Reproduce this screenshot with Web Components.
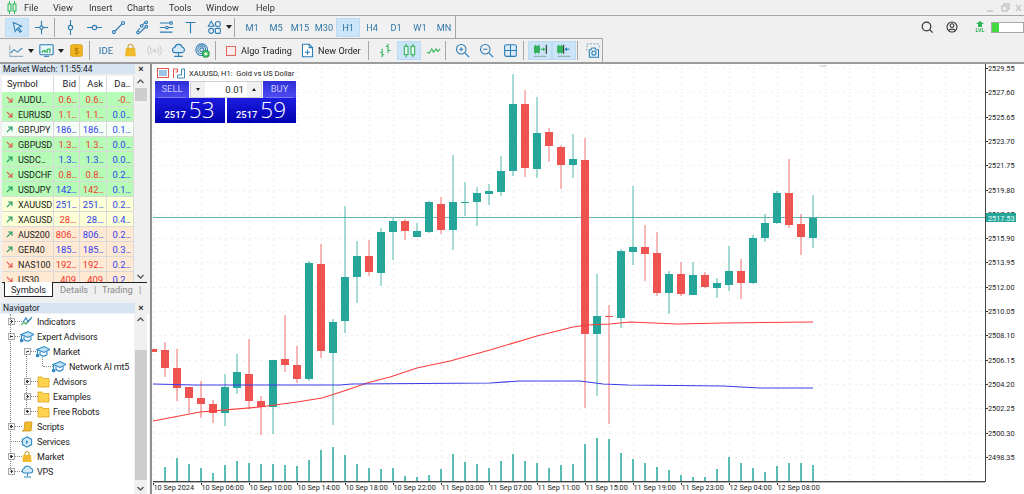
<!DOCTYPE html>
<html>
<head>
<meta charset="utf-8">
<title>MetaTrader 5</title>
<style>
    html, body { margin: 0; height: 494px; overflow: hidden; background: #f0f0f0; }
    body { font-family: Roboto, "Liberation Sans", sans-serif; font-size: 9.6px; color: #222; }
</style>
</head>
<body>
<mt-app>
    <mt-menu></mt-menu>
    <mt-toolbars></mt-toolbars>
    <mt-workspace>
        <market-watch slot="left"></market-watch>
        <mt-navigator slot="left"></mt-navigator>
        <mt-chart></mt-chart>
    </mt-workspace>
</mt-app>
<script>
const BLUE = "#2b7db5";
const GREEN = "#2fb457";

function svg(body, w = 15, h = 15) {
    return `<svg width="${w}" height="${h}" viewBox="0 0 18 18" fill="none" stroke="${BLUE}" stroke-width="1.3">${body}</svg>`;
}

const ICONS = {
    cursor: svg(`<path d="M4 3l10 4.5-4 1.6 3.6 4.2-1.5 1.3-3.6-4.2-2.3 3.4z" fill="#dcebf7"/>`),
    cross: svg(`<path d="M9 1v6M9 11v6M1 9h6M11 9h6"/><circle cx="9" cy="9" r="2"/>`),
    vline: svg(`<path d="M9 0v6M9 12v6"/><circle cx="9" cy="9" r="2.6"/>`),
    hline: svg(`<path d="M0 9h6M12 9h6"/><circle cx="9" cy="9" r="2.6"/>`),
    trend: svg(`<path d="M4.5 13.5L13.5 4.5"/><circle cx="3.5" cy="14.5" r="1.8"/><circle cx="14.5" cy="3.5" r="1.8"/>`),
    channel: svg(`<path d="M9.5 5.5l2.5-2.5M3 13l3-3M6 15l6-6"/><circle cx="13.5" cy="2.8" r="1.6"/><circle cx="8" cy="7" r="1.6"/><circle cx="3.6" cy="15" r="1.6"/><circle cx="13.6" cy="8" r="1.6"/>`),
    fib: svg(`<path d="M1 3.5h12M1 9h7M11 9h6M1 14.5h15"/><circle cx="14.5" cy="3.5" r="1.6"/><circle cx="9.5" cy="9" r="1.6"/>`),
    text: svg(`<path d="M3 3h12M9 3v13" stroke-width="1.4"/>`),
    shapes: svg(`<path d="M5 1.5l3.4 6h-6.8z"/><circle cx="13" cy="4.8" r="3"/><circle cx="5" cy="13" r="3"/><rect x="10" y="10" width="6" height="6" rx="1"/>`),
    chartLine: svg(`<path d="M1 2v14h16" stroke="#9ab0c2"/><path d="M2 12l4-4 4 3 6-5" stroke="#3f87b8"/>`),
    monitor: svg(`<rect x="1" y="2" width="16" height="12" rx="1" fill="#eaf4fb"/><path d="M3 11l3-2 2 1 3-3 3 1" stroke="#2fb457"/><path d="M6 16h6" /><path d="M4 12v-1M7 12v-2M10 12V9M13 12V7" stroke="#2fb457"/>`),
    gold: `<svg width="15" height="15" viewBox="0 0 18 18"><rect x="2" y="2" width="14" height="14" rx="2" fill="#f1b61f" stroke="#d99a12"/><text x="9" y="13" text-anchor="middle" font-size="10" font-family="Liberation Sans" fill="#a66a06">$</text></svg>`,
    bag: `<svg width="15" height="15" viewBox="0 0 18 18"><path d="M3.5 6h11l1 10h-13z" fill="#f2bb2c"/><path d="M6 7V4.5a3 3 0 0 1 6 0V7" fill="none" stroke="#c78f14" stroke-width="1.2"/></svg>`,
    signal: svg(`<g stroke="#c9c9c9"><circle cx="9" cy="9" r="1.6"/><path d="M5.5 5.5a5 5 0 0 0 0 7M12.5 5.5a5 5 0 0 1 0 7M3 3.5a8.5 8.5 0 0 0 0 11M15 3.5a8.5 8.5 0 0 1 0 11"/></g>`),
    cloud: svg(`<path d="M5 11.5a3 3 0 0 1-.5-6 4.6 4.6 0 0 1 9-.3 3.2 3.2 0 0 1 0 6.3z" fill="#d6eaf8"/><path d="M9 11.5v4M4 16h10"/>`),
    globe: svg(`<circle cx="8" cy="8" r="7"/><circle cx="8" cy="8" r="4.6"/><circle cx="8" cy="8" r="2.2"/><circle cx="13" cy="13" r="4" fill="#42c765" stroke="#2b9a4d"/><path d="M13 11v4M11 13h4" stroke="#fff"/>`),
    newOrder: svg(`<path d="M3 1.5h8l4 4v11H3z" fill="#fff"/><path d="M11 1.5v4h4M9 8v6M6 11h6"/>`),
    bars: svg(`<g stroke="#34b25c"><path d="M5 7v10M2.5 11H5M5 14h2.5M12 1v11M9.5 4H12M12 9h3"/></g>`),
    candles: svg(`<g stroke="#34b25c" fill="#e9f8ee"><path d="M5 1v16M13 1v16"/><rect x="2.8" y="4" width="4.4" height="10"/><rect x="10.8" y="4" width="4.4" height="10"/></g>`),
    line: svg(`<path d="M1 11l3 1 3-5 2 4 3-4 2 3 3-3" stroke="#34b25c"/>`),
    zoomIn: svg(`<circle cx="7.5" cy="7.5" r="5.7"/><path d="M12 12l5 5M5 7.5h5M7.5 5v5"/>`),
    zoomOut: svg(`<circle cx="7.5" cy="7.5" r="5.7"/><path d="M12 12l5 5M5 7.5h5"/>`),
    grid: svg(`<rect x="2" y="2" width="14" height="14" rx="2" fill="#dcebf7"/><path d="M9 2v14M2 9h14"/>`),
    scroll: svg(`<g stroke="#34b25c"><path d="M3 2v11M6.5 2v11"/><rect x="1.8" y="4" width="2.4" height="7" fill="#34b25c"/><rect x="5.3" y="4" width="2.4" height="7" fill="#34b25c"/><path d="M9 7.5h4"/></g><path d="M16 2v11" stroke="#333"/><path d="M12 5l3 2.5-3 2.5z" fill="${GREEN}" stroke="none"/><path d="M1 16h15" stroke="#8aa"/>`),
    shift: svg(`<g stroke="#34b25c"><path d="M2 2v11M5.5 2v11"/><rect x=".8" y="4" width="2.4" height="7" fill="#34b25c"/><rect x="4.3" y="4" width="2.4" height="7" fill="#34b25c"/></g><path d="M10 7.5h5" stroke="${BLUE}"/><path d="M12 5l-3 2.5 3 2.5z" fill="${BLUE}" stroke="none"/><path d="M8 2v11" stroke="#333"/><path d="M1 16h15" stroke="#8aa"/>`),
    camera: svg(`<path d="M1 1h2M5 1h2M9 1h2M13 1h2M1 3v2M1 7v2M16 3v2" stroke="#7eaccc"/><path d="M4 8h2l1-2h4l1 2h3v9H4z" fill="#e4f0f9"/><circle cx="9.5" cy="12" r="2.5"/>`)
};

class MtApp extends HTMLElement {
    constructor() {
        super();
        this.attachShadow({ mode: "open" });
        this.shadowRoot.innerHTML = `
            <style>
                :host { display: flex; flex-direction: column; width: 1024px; height: 494px; filter: blur(.35px); }
            </style>
            <slot></slot>
        `;
    }
}

class MtMenu extends HTMLElement {
    constructor() {
        super();
        this.attachShadow({ mode: "open" });
        const items = [["File", 29], ["View", 36], ["Insert", 38], ["Charts", 42], ["Tools", 37], ["Window", 50], ["Help", 30]];
        this.shadowRoot.innerHTML = `
            <style>
                :host {
                    display: flex; align-items: center; height: 15px; flex: none; padding-left: 24px;
                    border-bottom: 1px solid #a6a6a6; position: relative; font-size: 9.2px; color: #333;
                }
                .logo { position: absolute; left: 6px; top: 1px; }
                span { display: block; flex: none; }
                .win { margin-left: auto; padding-right: 2px; }
            </style>
            <svg class="logo" width="12" height="13" viewBox="0 0 12 13" fill="none" stroke="#2fb457">
                <path d="M3.5 0v13M8.5 0v13"/><rect x="2" y="3" width="3" height="7" fill="#d8f5df"/><rect x="7" y="3" width="3" height="7" fill="#d8f5df"/>
            </svg>
            ${items.map(([t, w]) => `<span style="width:${w}px">${t}</span>`).join("")}
            <svg class="win" width="36" height="12" viewBox="0 0 36 12" fill="none" stroke="#c4c4c4" stroke-width="1.3">
                <path d="M1 9h6M16 4h5v5h-5zM18 3V2h5v5h-1M30 3l5 6M35 3l-5 6"/>
            </svg>
        `;
    }
}

class MtToolbars extends HTMLElement {
    constructor() {
        super();
        this.attachShadow({ mode: "open" });
        const btn = (icon, on, w = 24) => `<div class="btn ${on ? "on" : ""}" style="width:${w}px">${ICONS[icon]}</div>`;
        const sep = (l, r) => `<div class="sep" style="margin-left:${l}px;margin-right:${r}px"></div>`;
        const drop = (w = 6) => `<div class="drop" style="width:${w}px"><i></i></div>`;
        const tf = (t, on) => `<div class="btn tf ${on ? "on" : ""}">${t}</div>`;
        this.shadowRoot.innerHTML = `
            <style>
                :host { display: block; flex: none; position: relative; height: 46px; }
                .row { display: flex; align-items: center; box-sizing: border-box; }
                .r1 { height: 22px; width: 456px; padding-left: 5px; border-right: 1px solid #a6a6a6; }
                .r2 { height: 24px; width: 603px; padding-left: 4px; border-top: 1px solid #a6a6a6; border-right: 1px solid #a6a6a6; }
                .btn {
                    height: 19px; flex: none; display: flex; align-items: center; justify-content: center;
                    box-sizing: border-box;
                }
                .on { background: #cce4f7; box-shadow: inset 0 0 0 1px #bcdcf4; }
                .tf { width: 24px; color: #2f77a8; font-size: 9.2px; }
                .sep { width: 1px; height: 19px; background: #a6a6a6; flex: none; }
                .drop { height: 19px; flex: none; display: flex; align-items: center; justify-content: center; }
                .drop i { border: 3px solid transparent; border-top: 4px solid #222; border-bottom: 0; }
                .ide { color: #2f77a8; font-size: 9.6px; }
                .lbl { display: flex; align-items: center; flex: none; font-size: 9.1px; color: #222; height: 19px; white-space: nowrap; }
                .box { width: 8px; height: 8px; border: 1px solid #e0655f; background: #fdecec; margin: 0 5px 0 3px; }
                .right {
                    position: absolute; left: 918px; top: 1px; display: flex; align-items: center; height: 20px;
                }
                .level { width: 31px; height: 9px; border: 1px solid #a8a8a8; background: linear-gradient(90deg, #45d941 7px, #fff 7px); margin-left: 5px; }
                .lvl { color: #2fb457; font: bold 5.5px Roboto, sans-serif; text-align: center; line-height: 6px; width: 12px; margin-left: 13px; }
            </style>
            <div class="row r1">
                ${btn("cursor", true, 24)}${btn("cross")}${sep(1, 3)}
                ${btn("vline")}${btn("hline")}${btn("trend")}${btn("channel")}${btn("fib")}${btn("text")}${btn("shapes")}
                ${drop(5)}${sep(3, 5)}
                ${tf("M1")}${tf("M5")}${tf("M15")}${tf("M30")}${tf("H1", true)}${tf("H4")}${tf("D1")}${tf("W1")}${tf("MN")}
            </div>
            <div class="row r2">
                ${btn("chartLine")}${drop()}<div style="width:1px"></div>${btn("monitor")}${drop()}<div style="width:3px"></div>${btn("gold")}${sep(1, 4)}
                <div class="btn ide" style="width:24px">IDE</div>${btn("bag")}${btn("signal")}${btn("cloud")}${btn("globe")}${sep(1, 7)}
                <div class="lbl" style="width:77px"><div class="box"></div>Algo Trading</div>
                <div class="lbl" style="width:67px">${ICONS.newOrder}<span style="margin-left:3px">New Order</span></div>
                ${sep(1, 4)}
                ${btn("bars")}${btn("candles", true)}${btn("line")}${sep(0, 4)}
                ${btn("zoomIn")}${btn("zoomOut")}${btn("grid")}${sep(1, 4)}
                ${btn("scroll", true)}${btn("shift", true)}${sep(1, 3)}
                ${btn("camera")}
            </div>
            <div class="right">
                <svg width="18" height="18" viewBox="0 0 18 18" fill="none" stroke="#333" stroke-width="1.2"><circle cx="8.5" cy="8.5" r="4.3"/><path d="M11.7 11.7l3 3"/></svg>
                <svg style="margin-left:7px" width="18" height="18" viewBox="0 0 18 18" fill="none" stroke="#333" stroke-width="1.1"><circle cx="9" cy="9" r="5"/><circle cx="9" cy="7.6" r="1.9"/><path d="M5.6 12.6c1-2 5.8-2 6.8 0"/></svg>
                <div class="lvl"><svg width="8" height="6" viewBox="0 0 8 6" style="display:block;margin:0 auto"><path d="M4 0l4 3H6v3H2V3H0z" fill="#2fb457"/></svg>LVL</div>
                <div class="level"></div>
            </div>
        `;
    }
}

class MtWorkspace extends HTMLElement {
    constructor() {
        super();
        this.attachShadow({ mode: "open" });
        this.shadowRoot.innerHTML = `
            <style>
                :host { display: flex; flex: 1; min-height: 0; border-top: 2px solid #9c9c9c; }
                .left { width: 149px; flex: none; display: flex; flex-direction: column; }
            </style>
            <div class="left"><slot name="left"></slot></div>
            <slot></slot>
        `;
    }
}

class MtScrollbar extends HTMLElement {
    constructor() {
        super();
        this.attachShadow({ mode: "open" });
        const top = this.getAttribute("thumb-top");
        const h = this.getAttribute("thumb-height");
        this.shadowRoot.innerHTML = `
            <style>
                :host { display: block; width: 13px; flex: none; position: relative; background: #f0f0f0; }
                .thumb { position: absolute; left: 1px; right: 0; background: #cdcdcd; }
                svg { position: absolute; left: 3px; }
                .up { top: 3px; }
                .down { bottom: 3px; }
            </style>
            <svg class="up" width="7" height="5" viewBox="0 0 7 5" fill="none" stroke="#555" stroke-width="1.3"><path d="M.5 4l3-3 3 3"/></svg>
            <div class="thumb" style="top:${top}px;height:${h}px"></div>
            <svg class="down" width="7" height="5" viewBox="0 0 7 5" fill="none" stroke="#555" stroke-width="1.3"><path d="M.5 1l3 3 3-3"/></svg>
        `;
    }
}

class PanelTitle extends HTMLElement {
    constructor() {
        super();
        this.attachShadow({ mode: "open" });
        this.shadowRoot.innerHTML = `
            <style>
                :host { display: flex; align-items: center; height: 10px; flex: none; font-size: 8.5px; color: #222; padding: 0 2px 0 1px; }
                .t { flex: 1; height: 10px; line-height: 10px; background: #d7e4f1; padding-left: 2px; white-space: nowrap; }
                .x { width: 12px; text-align: center; font: bold 9px/10px "Liberation Sans", sans-serif; }
            </style>
            <div class="t"><slot></slot></div>
            <div class="x">×</div>
        `;
    }
}

class MarketWatch extends HTMLElement {
    constructor() {
        super();
        this.attachShadow({ mode: "open" });
        const R = "#f0352c", B = "#2f3df0";
        const G = "#b6fbb6", W = "#f5fff5", Y = "#fdffd6", O = "#ffe9d2";
        const rows = [
            ["AUDU...", 0, "0.6...", "0.6...", "-0...", R, R, R, G],
            ["EURUSD", 0, "1.1...", "1.1...", "0.0...", R, R, B, G],
            ["GBPJPY", 1, "186...", "186...", "0.1...", B, B, B, W],
            ["GBPUSD", 0, "1.3...", "1.3...", "0.0...", R, R, B, G],
            ["USDC...", 1, "1.3...", "1.3...", "0.0...", B, B, B, G],
            ["USDCHF", 0, "0.8...", "0.8...", "0.2...", R, R, B, G],
            ["USDJPY", 1, "142...", "142...", "0.1...", B, R, B, G],
            ["XAUUSD", 1, "251...", "251...", "0.2...", B, B, B, Y],
            ["XAGUSD", 1, "28....", "28....", "0.4...", R, B, B, Y],
            ["AUS200", 1, "806...", "806...", "0.2...", R, B, B, O],
            ["GER40", 1, "185...", "185...", "0.3...", B, B, B, O],
            ["NAS100", 0, "192...", "192...", "0.2...", R, R, B, O],
            ["US30", 0, "409", "409", "0.2...", R, R, B, O]
        ];
        const arrow = up => up
            ? `<svg width="7" height="7" viewBox="0 0 7 7" fill="none" stroke="#1f9d63" stroke-width="1.1"><path d="M.8 6.2L6 1M2 1h4v4"/></svg>`
            : `<svg width="7" height="7" viewBox="0 0 7 7" fill="none" stroke="#e0564a" stroke-width="1.1"><path d="M.8.8L6 6M2 6h4V2"/></svg>`;
        const dots = v => v.replace(/\.+$/, m => `<span class="d">${m}</span>`);
        this.shadowRoot.innerHTML = `
            <style>
                :host { display: flex; flex-direction: column; height: 234px; flex: none; background: #f0f0f0; position: relative; }
                .body { display: flex; height: 206px; flex: none; margin-top: 2px; overflow: hidden; padding-left: 2px; }
                .table { width: 132px; flex: none; overflow: hidden; background: #fff; }
                .row { display: grid; grid-template-columns: 52px 26px 27px 27px; height: 15px; font-size: 9.4px; line-height: 16px; box-sizing: border-box; }
                .row > div { border-right: 1px solid #d9d9d9; border-bottom: 1px solid #d9d9d9; white-space: nowrap; overflow: hidden; padding-right: 3px; text-align: right; }
                .row > div:first-child { text-align: left; display: flex; align-items: center; gap: 5px; padding: 1px 0 0 4px; color: #222; font-size: 9px; letter-spacing: -.05px; }
                .row svg { flex: none; }
                .d { letter-spacing: -1px; }
                .head { height: 16px; background: #fff; color: #222; line-height: 16px; }
                .head > div { border-bottom: 0; }
                .head > div:first-child { padding: 0 0 0 5px; font-size: 9.4px; }
                .tabs { height: 16px; display: flex; align-items: flex-start; font-size: 9.2px; color: #8a8a8a; border-top: 1px solid #222; margin: 0 2px; flex: none; position: relative; }
                .tabs div { line-height: 14px; flex: none; }
                .active { margin-left: 2px; width: 49px; height: 15px; box-sizing: border-box; background: #fff; border: 1px solid #222; border-top: 0; text-align: center; color: #222; margin-top: -1px; }
                .active span { position: relative; top: 1px; }
            </style>
            <panel-title>Market Watch: 11:55:44</panel-title>
            <div class="body">
                <div class="table">
                    <div class="row head"><div>Symbol</div><div>Bid</div><div>Ask</div><div>Da<span class="d">...</span></div></div>
                    ${rows.map(r => `
                        <div class="row" style="background:${r[8]}">
                            <div>${arrow(r[1])}<span>${dots(r[0])}</span></div>
                            <div style="color:${r[5]}">${dots(r[2])}</div>
                            <div style="color:${r[6]}">${dots(r[3])}</div>
                            <div style="color:${r[7]}">${dots(r[4])}</div>
                        </div>`).join("")}
                </div>
                <mt-scrollbar thumb-top="12" thumb-height="13"></mt-scrollbar>
            </div>
            <div class="tabs">
                <div class="active"><span>Symbols</span></div>
                <div style="margin-left:7px;width:34px">Details</div><div style="width:8px">|</div>
                <div style="width:37px">Trading</div><div>|</div>
            </div>
        `;
    }
}

class MtNavigator extends HTMLElement {
    constructor() {
        super();
        this.attachShadow({ mode: "open" });
        const cap = `<svg width="14" height="13" viewBox="0 0 14 13" fill="none" stroke="#2b87c4" stroke-width="1.1"><path d="M1 4.5L8 1.5l6 3-6 3z" fill="#bfe2f7"/><path d="M4 6.5v3c2 1.8 5 1.8 7 0v-3"/><path d="M1.5 5v4"/><circle cx="1.6" cy="10.5" r="1.3" fill="#2b87c4"/></svg>`;
        const folder = `<svg width="13" height="13" viewBox="0 0 13 13"><path d="M1 2h4l1 1.5h6V12H1z" fill="#ffd34e" stroke="#d9a520" stroke-width=".8"/></svg>`;
        const ind = `<svg width="12" height="11" viewBox="0 0 12 11" fill="none" stroke-width="1.2"><path d="M0 9l3-3 2 2 5-6" stroke="#3fae5a"/><path d="M2 6l3-4 2 4 4-5" stroke="#3b88c3"/></svg>`;
        const scripts = `<svg width="11" height="11" viewBox="0 0 11 11"><path d="M3 1h7l-1 9H0c1 0 2-.5 2-1.5z" fill="#f3bc2e" stroke="#c88f14" stroke-width=".8"/></svg>`;
        const gear = `<svg width="12" height="12" viewBox="0 0 12 12" fill="#d2e9f8" stroke="#2b87c4" stroke-width="1.1"><path d="M6 .8l4.6 2.6v5.2L6 11.2 1.4 8.6V3.4z"/><path d="M5 4l2.4 2L5 8z" fill="#2b87c4" stroke="none"/></svg>`;
        const bag = `<svg width="10" height="11" viewBox="0 0 10 11"><path d="M1 4h8l.6 7H.4z" fill="#f3bc2e"/><path d="M3 4.5V2.5a2 2 0 0 1 4 0v2" fill="none" stroke="#c88f14"/></svg>`;
        const cloud = `<svg width="13" height="13" viewBox="0 0 13 13" fill="none" stroke="#2b87c4" stroke-width="1.1"><path d="M3 8a2.3 2.3 0 0 1 0-4.5 3.6 3.6 0 0 1 6.8-.2A2.4 2.4 0 0 1 10 8z" fill="#cfe7f7"/><path d="M6.5 8v3M3 12h7"/></svg>`;
        // level, expander (1 plus, -1 minus, 0 none), icon, label
        const rows = [
            [0, 1, ind, "Indicators"],
            [0, -1, cap, "Expert Advisors"],
            [1, -1, cap, "Market"],
            [2, 0, cap, "Network AI mt5"],
            [1, 1, folder, "Advisors"],
            [1, 1, folder, "Examples"],
            [1, 1, folder, "Free Robots"],
            [0, 1, scripts, "Scripts"],
            [0, 0, gear, "Services"],
            [0, 1, bag, "Market"],
            [0, 1, cloud, "VPS"]
        ];
        this.shadowRoot.innerHTML = `
            <style>
                :host { display: flex; flex-direction: column; flex: 1; min-height: 0; padding-top: 5px; background: #f0f0f0; }
                .body { flex: 1; display: flex; background: #fff; margin-top: 1px; position: relative; padding-left: 1px; }
                .tree { flex: 1; }
                .node { height: 15px; display: flex; align-items: center; font-size: 9px; letter-spacing: -.15px; color: #222; position: relative; white-space: nowrap; }
                .exp { position: absolute; width: 5px; height: 5px; border: 1px solid #aaa; background: #f6f6f6; top: 4px; }
                .exp::before { content: ""; position: absolute; left: 1px; right: 1px; top: 2px; height: 1px; background: #333; }
                .exp.plus::after { content: ""; position: absolute; top: 1px; bottom: 1px; left: 2px; width: 1px; background: #333; }
                .ic { position: absolute; width: 14px; height: 15px; display: flex; align-items: center; justify-content: center; }
                .lbl { position: absolute; }
                .v { position: absolute; width: 0; border-left: 1px dotted #8a8a8a; }
                .h { position: absolute; height: 0; border-top: 1px dotted #8a8a8a; }
            </style>
            <panel-title>Navigator</panel-title>
            <div class="body">
                <div class="tree">
                    ${rows.map(([l, e, ic, t]) => {
                        const expX = 7 + l * 16, icX = 19 + l * 16, txtX = 36 + l * 16;
                        return `<div class="node">
                            <div class="h" style="left:${expX + 3}px;width:${l == 2 ? 10 : 11}px;top:7px"></div>
                            ${e ? `<div class="exp ${e > 0 ? "plus" : ""}" style="left:${expX}px"></div>` : ""}
                            <div class="ic" style="left:${icX}px">${ic}</div>
                            <div class="lbl" style="left:${txtX}px">${t}</div>
                        </div>`;
                    }).join("")}
                    <div class="v" style="left:10px;top:0;height:158px"></div>
                    <div class="v" style="left:26px;top:37px;height:60px"></div>
                    <div class="v" style="left:42px;top:43px;height:9px"></div>
                </div>
                <mt-scrollbar thumb-top="36" thumb-height="130" style="margin-right:2px"></mt-scrollbar>
            </div>
        `;
    }
}

class TradePanel extends HTMLElement {
    constructor() {
        super();
        this.attachShadow({ mode: "open" });
        this.shadowRoot.innerHTML = `
            <style>
                :host { display: grid; position: absolute; left: 3px; top: 17px; width: 141px; height: 42px; grid-template-columns: 34px 74px 33px; grid-template-rows: 17px 25px; color: #fff; }
                .btn { background: linear-gradient(#2e2ed8, #4c4cf0); color: #c9c9ff; font-size: 9.4px; text-align: center; line-height: 16px; box-sizing: border-box; }
                .btn span { display: block; margin: 0 3px; height: 16px; border-bottom: 1px solid #7a7af0; }
                .lot { background: #f0f0f0; border: 1px solid #cfcfcf; box-sizing: border-box; display: flex; margin: 0 1px; height: 17px; color: #333; font-size: 9.6px; }
                .lot b { width: 14px; display: flex; align-items: center; justify-content: center; }
                .lot i { border: 2.5px solid transparent; }
                .dn { border-top: 3px solid #222 !important; border-bottom: 0 !important; }
                .up { border-bottom: 3px solid #222 !important; border-top: 0 !important; }
                .lot span { flex: 1; background: #fff; text-align: right; padding-right: 3px; line-height: 15px; }
                .bigs { grid-column: 1 / 4; display: flex; gap: 2px; }
                .big { flex: 1; background: linear-gradient(#1c1ce0, #0000b0); display: flex; align-items: baseline; justify-content: flex-end; box-sizing: border-box; padding-right: 10px; height: 25px; }
                .big small { font-size: 9.4px; font-weight: 500; margin-right: 3px; }
                .big strong { font: 300 22.5px/23px "Open Sans", sans-serif; }
            </style>
            <div class="btn"><span>SELL</span></div>
            <div class="lot"><b><i class="dn"></i></b><span>0.01</span><b><i class="up"></i></b></div>
            <div class="btn"><span>BUY</span></div>
            <div class="bigs">
                <div class="big"><small>2517</small><strong>53</strong></div>
                <div class="big"><small>2517</small><strong>59</strong></div>
            </div>
        `;
    }
}

class MtChart extends HTMLElement {
    constructor() {
        super();
        this.attachShadow({ mode: "open" });
    }

    connectedCallback() {
        // x, g(reen)/r(ed), high, body top, body bottom, low, pale wick
        const bars = [
            [165,"r",342,350,368,377,1],[177,"r",349,368,388,401,1],[189,"r",387,387,398,413,1],[201,"r",381,398,404,418,1],
            [213,"r",400,404,413,423,1],[225,"g",374,387,413,426,1],[237,"g",354,372,388,394,1],[249,"r",339,374,401,409,1],
            [261,"r",396,401,407,435,1],[273,"g",360,360,407,434,1],[285,"r",315,359,365,372,1],[297,"r",346,365,379,383,1],
            [309,"g",261,263,379,381],[321,"r",244,264,351,358,1],[333,"g",319,322,353,425],[345,"g",206,277,321,333],
            [357,"g",241,256,277,303],[369,"r",240,256,272,276],[381,"g",228,232,273,286],[393,"g",218,221,232,260],
            [405,"r",219,221,231,240],[417,"g",223,231,237,237],[429,"g",201,202,232,233],[441,"r",197,204,230,234],
            [453,"g",155,202,230,250],[465,"g",182,202,203,216],[477,"g",187,193,202,226],[489,"g",184,191,194,205],
            [501,"g",156,171,192,196],[513,"g",74,104,171,176],[525,"r",90,104,168,177],[537,"g",97,133,169,178],
            [549,"r",128,132,146,162],[561,"r",145,147,165,189],[573,"g",134,159,165,178],[585,"r",138,160,334,408],
            [597,"g",274,316,334,396],[609,"r",305,316,317,424],[621,"g",249,251,318,328],[633,"g",186,247,252,265],
            [645,"r",225,247,254,281],[657,"r",232,253,293,296],[669,"g",271,274,293,314,1],[681,"r",262,274,294,296,1],
            [693,"g",262,275,295,295,1],[705,"r",272,275,287,288,1],[717,"g",278,283,288,298,1],[729,"g",246,271,285,291,1],
            [741,"r",259,271,283,299,1],[753,"g",235,238,283,284,1],[765,"g",214,223,238,242,1],[777,"g",191,193,223,224,1],
            [789,"r",159,193,225,228,1],[801,"r",214,224,237,255,1],[813,"g",195,218,238,248,1]
        ];
        const vols = [467,458,464,468,473,465,461,463,464,464,465,466,460,450,447,455,464,468,469,468,476,477,475,469,454,462,464,468,
            461,454,461,463,468,465,464,444,438,439,453,459,463,467,470,475,477,477,469,457,463,468,472,466,463,463,465];
        const prices = ["2529.55","2527.60","2525.65","2523.70","2521.75","2519.80","2517.85","2515.90","2513.95","2512.00","2510.05","2508.10","2506.15","2504.20","2502.25","2500.30","2498.35"];
        const times = ["10 Sep 2024","10 Sep 06:00","10 Sep 10:00","10 Sep 14:00","10 Sep 18:00","10 Sep 22:00","11 Sep 03:00","11 Sep 07:00","11 Sep 11:00","11 Sep 15:00","11 Sep 19:00","11 Sep 23:00","12 Sep 04:00","12 Sep 08:00"];
        const redMa = "153,421 200,412 260,407 297,402 322,398 347,390 367,383 390,377 417,368 450,361 490,350 537,336 573,327 587,325 610,324 630,322 677,324 723,323 813,322";
        const blueMa = "153,384 195,385 340,385 352,384 490,383 520,381 580,381 603,384 628,385 723,386 760,388 813,388";
        const col = { g: "#26a69a", r: "#ef5350" };
        const priceY = i => 68 + i * 24.31;

        let grid = "";
        for (let x = 153; x < 985; x += 24) grid += `<path d="M${x + .5} 65V481"/>`;
        prices.forEach((p, i) => grid += `<path d="M153 ${Math.round(priceY(i)) + .5}H985"/>`);

        const candles = bars.map(([x, c, hi, top, bot, lo, pale]) => `
            <rect x="${pale ? x - 1 : x - .5}" y="${hi}" width="${pale ? 2 : 1}" height="${lo - hi}" fill="${col[c]}" opacity="${pale ? .42 : .8}"/>
            <rect x="${x - 4}" y="${top}" width="8" height="${Math.max(bot - top, 1)}" fill="${col[c]}"/>`).join("");

        const volumes = vols.map((t, i) => `<rect x="${165 + i * 12 - .75}" y="${t}" width="1.5" height="${481 - t}" fill="#26a69a"/>`).join("");

        const yAxis = prices.map((p, i) => {
            const y = Math.round(priceY(i));
            return `<path d="M985 ${y + .5}h3" stroke="#333"/><text x="988" y="${y + 3}">${p}</text>`;
        }).join("");
        const xAxis = times.map((t, i) => {
            const x = 153 + i * 48;
            return `<path d="M${x + .5} 481v4" stroke="#333"/><text x="${x + .5}" y="490">${t}</text>`;
        }).join("");

        this.shadowRoot.innerHTML = `
            <style>
                :host { display: block; flex: 1; position: relative; background: #fff; border-left: 2px solid #8f8f8f; margin-left: 1px; overflow: hidden; }
                svg.canvas { position: absolute; left: 0; top: 0; display: block; }
                text { font-family: Roboto, sans-serif; font-size: 7.3px; fill: #222; }
                .head { position: absolute; left: 5px; top: 3px; display: flex; align-items: center; gap: 4px; font-size: 7.6px; color: #222; height: 12px; white-space: pre; }
            </style>
            <svg class="canvas" width="873" height="430" viewBox="152 64 873 430">
                <g stroke="#ececec" stroke-dasharray="2 4" fill="none">${grid}</g>
                <path d="M818 65h10l-3 2h-4z" fill="#ddd"/>
                <path d="M153 217.5H985" stroke="#62b6aa"/>
                ${volumes}
                <rect x="150" y="349" width="7" height="3" fill="#ef5350"/>
                ${candles}
                <polyline points="${redMa}" fill="none" stroke="#ff3b3b" stroke-width="1.1"/>
                <polyline points="${blueMa}" fill="none" stroke="#3c3ce8" stroke-width="1.1"/>
                ${yAxis}${xAxis}
                <path d="M985.5 64V481.5H153" fill="none" stroke="#444"/>
                <path d="M153 482.5H985" stroke="#b5b5b5"/>
                <rect x="986" y="213" width="30" height="9" fill="#26a69a"/>
                <text x="988" y="220.5" style="fill:#e8fffb">2517.53</text>
            </svg>
            <div class="head">
                <svg width="12" height="10" viewBox="0 0 12 10" fill="none" stroke="#e0564a"><rect x=".5" y=".5" width="11" height="9"/><path d="M2 3h8M2 5h8M2 7h8" stroke="#3b88c3"/></svg>
                <svg width="12" height="11" viewBox="0 0 12 11" fill="none"><path d="M.5 10V1h4v3h-2" stroke="#e0564a"/><path d="M11.5 10V1h-3v6h-4v3z" stroke="#3b88c3"/></svg>
                <span>XAUUSD, H1:  Gold vs US Dollar</span>
            </div>
            <trade-panel></trade-panel>
        `;
    }
}

customElements.define("mt-app", MtApp);
customElements.define("mt-menu", MtMenu);
customElements.define("mt-toolbars", MtToolbars);
customElements.define("mt-workspace", MtWorkspace);
customElements.define("mt-scrollbar", MtScrollbar);
customElements.define("panel-title", PanelTitle);
customElements.define("market-watch", MarketWatch);
customElements.define("mt-navigator", MtNavigator);
customElements.define("trade-panel", TradePanel);
customElements.define("mt-chart", MtChart);
</script>
</body>
</html>
